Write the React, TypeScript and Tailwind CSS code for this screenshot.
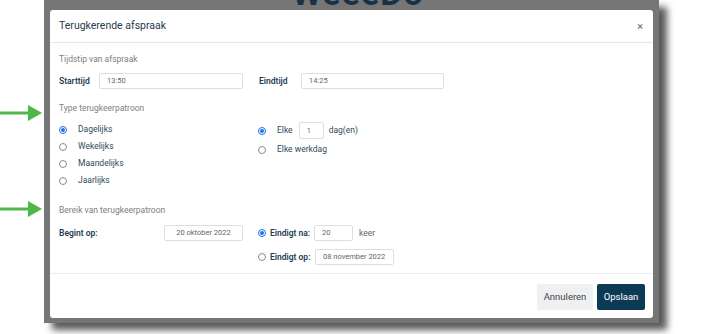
import React from "react";

const Radio = ({ checked }: { checked?: boolean }) =>
  checked ? (
    <span className="flex h-[8px] w-[8px] shrink-0 items-center justify-center rounded-full border border-[#1a73e8] bg-white">
      <span className="h-[4px] w-[4px] rounded-full bg-[#1a73e8]" />
    </span>
  ) : (
    <span className="h-[8px] w-[8px] shrink-0 rounded-full border border-[#8a8a8a] bg-white" />
  );

const Field = ({ value, className, center }: { value: string; className: string; center?: boolean }) => (
  <div
    className={`flex h-[16px] items-center whitespace-nowrap rounded-[2px] border border-[#dedede] bg-white px-[7px] text-[7.5px] text-[#666] ${
      center ? "justify-center" : ""
    } ${className}`}
  >
    {value}
  </div>
);

const Arrow = ({ top }: { top: string }) => (
  <svg className={`absolute left-0 ${top}`} width="42" height="16" viewBox="0 0 42 16">
    <rect x="0" y="6.5" width="30" height="3" fill="#4cb848" />
    <polygon points="28,0 42,8 28,16" fill="#4cb848" />
  </svg>
);

const patterns = ["Dagelijks", "Wekelijks", "Maandelijks", "Jaarlijks"];

export default function App() {
  return (
    <div
      className="relative flex h-[334px] w-[704px] overflow-hidden bg-white text-[#2f4a5c]"
      style={{ fontFamily: "Roboto, 'Liberation Sans', sans-serif" }}
    >
      <Arrow top="top-[105px]" />
      <Arrow top="top-[201px]" />

      <div className="relative ml-[44px] h-[323px] w-[615px] overflow-hidden bg-[#767676] px-[6px] pt-[10px] pb-[5px] shadow-[8px_7px_7px_rgba(0,0,0,0.65)]">
        <div className="absolute left-[248px] top-[-32px] text-[34px] font-bold tracking-[1px] text-[#173246]">WeeeDo</div>

        <div className="relative flex h-[308px] flex-col rounded-[3px] bg-white">
          <div className="flex h-[33px] shrink-0 items-center justify-between border-b border-[#e6e6e6] pl-[9px] pr-[10px]">
            <span className="text-[10.5px] text-[#1f3b4d]">Terugkerende afspraak</span>
            <span className="text-[11px] leading-none text-[#666]">×</span>
          </div>

          <div className="flex flex-col border-b border-[#ececec] px-[9px] pb-[8px] pt-[7px] text-[8.5px]">
            <div className="flex h-[18px] items-center text-[#808080]">Tijdstip van afspraak</div>

            <div className="mt-[5px] flex h-[16px] items-center">
              <span className="w-[40px] font-semibold text-[#1e3d52]">Starttijd</span>
              <Field value="13:50" className="w-[144px]" />
              <span className="ml-[16px] w-[42px] font-semibold text-[#1e3d52]">Eindtijd</span>
              <Field value="14:25" className="w-[143px]" />
            </div>

            <div className="mt-[10px] flex h-[18px] items-center text-[#808080]">Type terugkeerpatroon</div>

            <div className="mt-[4px] flex">
              <div className="flex w-[199px] flex-col">
                {patterns.map((p, i) => (
                  <div key={p} className="flex h-[17px] items-center">
                    <Radio checked={i === 0} />
                    <span className="ml-[11px]">{p}</span>
                  </div>
                ))}
              </div>
              <div className="flex flex-col pt-[1px]">
                <div className="flex h-[17px] items-center">
                  <Radio checked />
                  <span className="ml-[11px]">Elke</span>
                  <Field value="1" className="ml-[6px] h-[17px] w-[25px]" />
                  <span className="ml-[5px]">dag(en)</span>
                </div>
                <div className="mt-[2px] flex h-[17px] items-center">
                  <Radio />
                  <span className="ml-[11px]">Elke werkdag</span>
                </div>
              </div>
            </div>

            <div className="mt-[12px] flex h-[18px] items-center text-[#808080]">Bereik van terugkeerpatroon</div>

            <div className="mt-[6px] flex">
              <div className="flex h-[16px] w-[199px] items-center">
                <span className="w-[105px] font-semibold text-[#1e3d52]">Begint op:</span>
                <Field value="20 oktober 2022" center className="w-[79px]" />
              </div>
              <div className="flex flex-col gap-[8px]">
                <div className="flex h-[16px] items-center">
                  <Radio checked />
                  <span className="ml-[4px] w-[44px] whitespace-nowrap font-semibold text-[#1e3d52]">Eindigt na:</span>
                  <Field value="20" className="w-[39px]" />
                  <span className="ml-[6px] text-[#666]">keer</span>
                </div>
                <div className="flex h-[16px] items-center">
                  <Radio />
                  <span className="ml-[4px] w-[45px] whitespace-nowrap font-semibold text-[#1e3d52]">Eindigt op:</span>
                  <Field value="08 november 2022" className="w-[79px]" />
                </div>
              </div>
            </div>
          </div>

          <div className="flex flex-1 items-start justify-end gap-[4px] pr-[8px] pt-[10px]">
            <button className="h-[26px] w-[56px] rounded-[2px] bg-[#eef0f2] text-[9.5px] text-[#444]">Annuleren</button>
            <button className="h-[26px] w-[48px] rounded-[2px] bg-[#0c3a55] text-[9.5px] text-white">Opslaan</button>
          </div>
        </div>
      </div>
    </div>
  );
}
